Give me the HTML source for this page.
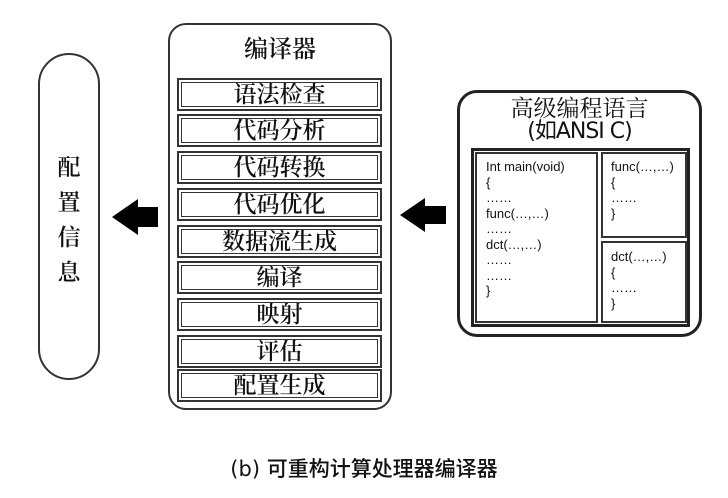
<!DOCTYPE html>
<html><head><meta charset="utf-8"><style>
body{margin:0;width:728px;height:498px;background:#fff;position:relative;overflow:hidden;font-family:"Liberation Sans","Noto Sans CJK SC",sans-serif;color:#111}
.a{position:absolute;box-sizing:border-box}
.row{position:absolute;left:177px;width:205px;height:33px;border:2px solid #333;outline:1px solid #333;outline-offset:-5px;box-sizing:border-box;text-align:center;font-family:"Noto Serif CJK SC","Noto Sans CJK SC",serif;font-size:23px;line-height:26px;font-weight:600}
.code{font-family:"Liberation Sans","DejaVu Sans",sans-serif;font-size:13px;line-height:15.5px}
</style></head><body>
<div class="a" style="left:38px;top:53px;width:62px;height:327px;border:2px solid #333;border-radius:31px"></div>
<div class="a" style="left:38px;top:148px;width:62px;text-align:center;font-family:'Noto Serif CJK SC','Noto Sans CJK SC',serif;font-size:23px;line-height:35px;font-weight:600">配<br>置<br>信<br>息</div>
<svg class="a" style="left:0;top:0" width="728" height="498">
<polygon points="112,217 138,199 138,207 158,207 158,227 138,227 138,235" fill="#000"/>
<polygon points="400,215 425,198 425,206 446,206 446,224 425,224 425,232" fill="#000"/>
</svg>
<div class="a" style="left:168px;top:23px;width:224px;height:387px;border:2px solid #333;border-radius:18px"></div>
<div class="a" style="left:168px;top:31px;width:224px;text-align:center;font-family:'Noto Serif CJK SC','Noto Sans CJK SC',serif;font-size:24px;line-height:32px;font-weight:600">编译器</div>
<div class="row" style="top:78px">语法检查</div>
<div class="row" style="top:114px">代码分析</div>
<div class="row" style="top:151px">代码转换</div>
<div class="row" style="top:188px">代码优化</div>
<div class="row" style="top:225px">数据流生成</div>
<div class="row" style="top:261px">编译</div>
<div class="row" style="top:298px">映射</div>
<div class="row" style="top:335px">评估</div>
<div class="row" style="top:369px">配置生成</div>
<div class="a" style="left:457px;top:90px;width:245px;height:247px;border:3px solid #222;border-radius:20px"></div>
<div class="a" style="left:457px;top:94px;width:245px;text-align:center;font-size:23px;line-height:26px;font-family:'Noto Serif CJK SC','Noto Sans CJK SC',serif">高级编程语言</div>
<div class="a" style="left:457px;top:119px;width:245px;text-align:center;font-size:22px;line-height:25px;font-family:'DejaVu Sans','Noto Sans CJK SC',sans-serif;letter-spacing:-1px">(如ANSI C)</div>
<div class="a" style="left:471px;top:148px;width:219px;height:179px;border:3px solid #222"></div>
<div class="a code" style="left:475px;top:152px;width:123px;height:171px;border:2px solid #333;padding:5px 0 0 9px">Int main(void)<br>{<br>……<br>func(…,…)<br>……<br>dct(…,…)<br>……<br>……<br>}</div>
<div class="a code" style="left:601px;top:152px;width:86px;height:86px;border:2px solid #333;padding:5px 0 0 8px">func(…,…)<br>{<br>……<br>}</div>
<div class="a code" style="left:601px;top:241px;width:86px;height:82px;border:2px solid #333;padding:6px 0 0 8px">dct(…,…)<br>{<br>……<br>}</div>
<div class="a" style="left:0;top:455px;width:728px;text-align:center;font-size:21px;line-height:28px;font-family:'DejaVu Sans','Noto Sans CJK SC',sans-serif;font-weight:500">(b) 可重构计算处理器编译器</div>
</body></html>
